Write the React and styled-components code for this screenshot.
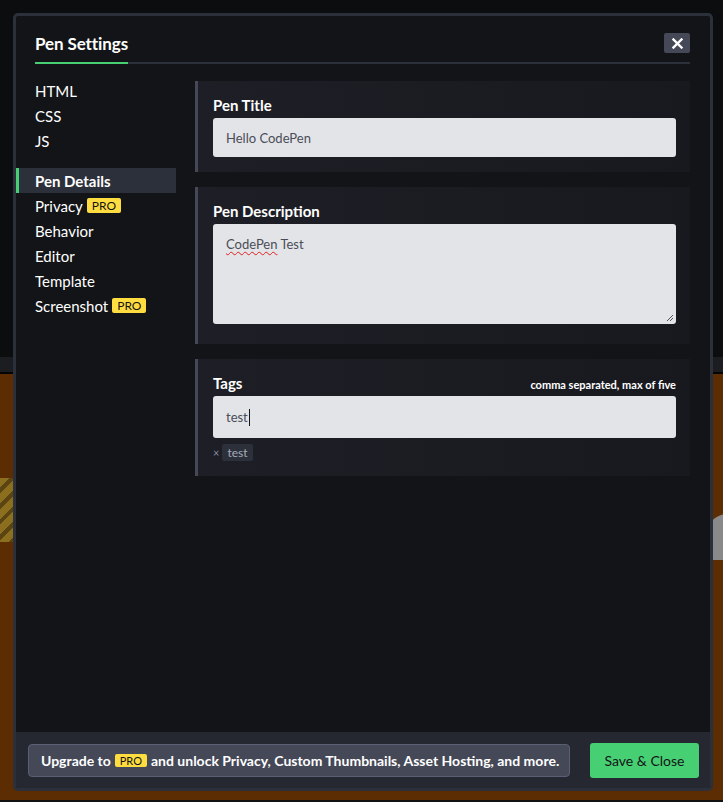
import React from "react";
import styled, { createGlobalStyle } from "styled-components";

const Global = createGlobalStyle`
  html, body { margin: 0; padding: 0; }
  body {
    height: 802px;
    overflow: hidden;
    font-family: Lato, "Open Sans", "Liberation Sans", sans-serif;
    background:
      repeating-linear-gradient(135deg, #8c6e1f 0 7px, #5a4512 7px 11px) 0 478px / 13px 64px no-repeat,
      radial-gradient(circle at 40px 40px, #8a8a8a 0 26px, transparent 27px) 690px 500px / 40px 60px no-repeat,
      linear-gradient(to bottom, #0c0d0f 0, #0c0d0f 357px, #1c1d21 357px, #1c1d21 372px, #050505 372px, #050505 374px, #5c2c02 374px, #5c2c02 800px, #111 800px);
  }
`;

const Page = styled.div`
  padding: 13px 10px 11px 13px;
  box-sizing: border-box;
  height: 802px;
`;

const Modal = styled.div`
  width: 700px;
  height: 778px;
  box-sizing: border-box;
  border: 3px solid #2c303a;
  border-radius: 5px;
  background: #131417;
  display: flex;
  flex-direction: column;
  overflow: hidden;
`;

const Header = styled.div`
  padding: 17px 20px 0 19px;
`;

const TitleRow = styled.div`
  display: flex;
  justify-content: space-between;
  align-items: center;
  height: 20px;
`;

const Title = styled.h1`
  margin: 0;
  font-size: 17px;
  font-weight: 700;
  color: #fff;
  letter-spacing: -0.1px;
`;

const CloseButton = styled.button`
  width: 26px;
  height: 20px;
  border: 0;
  border-radius: 2px;
  background: #444857;
  display: flex;
  align-items: center;
  justify-content: center;
  padding: 0;
`;

const Rule = styled.div`
  margin-top: 9px;
  height: 2px;
  background: linear-gradient(to right, #47cf73 0 93px, #2c303a 93px);
`;

const Body = styled.div`
  flex: 1;
  display: flex;
  gap: 19px;
  padding-right: 20px;
`;

const Sidebar = styled.nav`
  width: 160px;
  flex-shrink: 0;
  padding-top: 14px;
  display: flex;
  flex-direction: column;
`;

const NavGroup = styled.div`
  display: flex;
  flex-direction: column;
  margin-bottom: ${(p) => (p.$gap ? "15px" : "0")};
`;

const NavItem = styled.div`
  height: 25px;
  display: flex;
  align-items: center;
  padding-left: 19px;
  font-size: 15px;
  color: #fff;
  font-weight: ${(p) => (p.$active ? 700 : 400)};
  background: ${(p) => (p.$active ? "#2c303a" : "transparent")};
  box-shadow: ${(p) => (p.$active ? "inset 3px 0 0 #47cf73" : "none")};
`;

const Pro = styled.span`
  display: inline-flex;
  align-items: center;
  height: ${(p) => (p.$small ? "13px" : "15px")};
  padding: 0 5px;
  margin: 0 ${(p) => (p.$small ? "4px" : "0")} 0 4px;
  background: #ffdd40;
  color: #131417;
  border-radius: 2px;
  font-size: ${(p) => (p.$small ? "11px" : "12px")};
  font-weight: 400;
  line-height: 1;
`;

const Content = styled.div`
  flex: 1;
  padding-top: 17px;
  display: flex;
  flex-direction: column;
  gap: 15px;
`;

const Panel = styled.section`
  border-left: 3px solid #444857;
  background: linear-gradient(to right, #1e1f26, #18191e);
  padding: ${(p) => p.$pad};
`;

const LabelRow = styled.div`
  display: flex;
  justify-content: space-between;
  align-items: baseline;
  height: 20px;
  margin-bottom: 3px;
`;

const Label = styled.label`
  font-size: 15px;
  font-weight: 700;
  color: #fff;
  line-height: 20px;
`;

const Hint = styled.span`
  font-size: 11px;
  font-weight: 700;
  color: #fff;
`;

const Field = styled.div`
  position: relative;
  box-sizing: border-box;
  height: ${(p) => p.$h}px;
  background: #e3e4e8;
  border-radius: 3px;
  padding: ${(p) => (p.$multi ? "12px 13px" : "0 13px")};
  display: flex;
  align-items: ${(p) => (p.$multi ? "flex-start" : "center")};
  font-size: 13px;
  color: #4a4d57;
`;

const Misspelled = styled.span`
  text-decoration: underline wavy #e02020;
  text-decoration-thickness: 1px;
  text-underline-offset: 2px;
`;

const Caret = styled.span`
  display: inline-block;
  width: 1px;
  height: 17px;
  background: #131417;
  margin-left: 1px;
`;

const Grip = styled.svg`
  position: absolute;
  right: 2px;
  bottom: 2px;
`;

const TagRow = styled.div`
  display: flex;
  align-items: center;
  margin-top: 6px;
  gap: 3px;
`;

const TagRemove = styled.span`
  font-size: 11px;
  color: #868ca0;
`;

const Tag = styled.span`
  height: 17px;
  padding: 0 5px;
  background: #2c303a;
  border-radius: 2px;
  color: #a7abb9;
  font-size: 12px;
  display: flex;
  align-items: center;
`;

const Footer = styled.footer`
  height: 56px;
  box-sizing: border-box;
  background: #252830;
  padding: 11px 11px 0 12px;
  display: flex;
  justify-content: space-between;
  align-items: flex-start;
`;

const Upgrade = styled.div`
  margin-top: 1px;
  height: 33px;
  box-sizing: border-box;
  width: 542px;
  background: #444857;
  border: 1px solid #5a5f73;
  border-radius: 4px;
  display: flex;
  align-items: center;
  padding-left: 12px;
  font-size: 14px;
  font-weight: 700;
  color: #fff;
  white-space: nowrap;
`;

const SaveButton = styled.button`
  width: 109px;
  height: 35px;
  border: 0;
  border-radius: 3px;
  background: #47cf73;
  color: #131417;
  font-family: inherit;
  font-size: 14px;
  padding: 0;
`;

export default function App() {
  return (
    <>
      <Global />
      <Page>
        <Modal>
          <Header>
            <TitleRow>
              <Title>Pen Settings</Title>
              <CloseButton aria-label="Close">
                <svg width="11" height="11" viewBox="0 0 11 11">
                  <path d="M1.5 1.5 L9.5 9.5 M9.5 1.5 L1.5 9.5" stroke="#fff" strokeWidth="2.4" strokeLinecap="square" />
                </svg>
              </CloseButton>
            </TitleRow>
            <Rule />
          </Header>
          <Body>
            <Sidebar>
              <NavGroup $gap>
                <NavItem>HTML</NavItem>
                <NavItem>CSS</NavItem>
                <NavItem>JS</NavItem>
              </NavGroup>
              <NavGroup>
                <NavItem $active>Pen Details</NavItem>
                <NavItem>Privacy<Pro>PRO</Pro></NavItem>
                <NavItem>Behavior</NavItem>
                <NavItem>Editor</NavItem>
                <NavItem>Template</NavItem>
                <NavItem>Screenshot<Pro>PRO</Pro></NavItem>
              </NavGroup>
            </Sidebar>
            <Content>
              <Panel $pad="14px 14px 15px 15px">
                <LabelRow><Label>Pen Title</Label></LabelRow>
                <Field $h={39}>Hello CodePen</Field>
              </Panel>
              <Panel $pad="14px 14px 20px 15px">
                <LabelRow><Label>Pen Description</Label></LabelRow>
                <Field $h={100} $multi>
                  <span><Misspelled>CodePen</Misspelled> Test</span>
                  <Grip width="10" height="10" viewBox="0 0 10 10">
                    <path d="M9 3 L3 9 M9 6 L6 9" stroke="#555" strokeWidth="1" />
                  </Grip>
                </Field>
              </Panel>
              <Panel $pad="14px 14px 15px 15px">
                <LabelRow>
                  <Label>Tags</Label>
                  <Hint>comma separated, max of five</Hint>
                </LabelRow>
                <Field $h={42}>test<Caret /></Field>
                <TagRow>
                  <TagRemove>×</TagRemove>
                  <Tag>test</Tag>
                </TagRow>
              </Panel>
            </Content>
          </Body>
          <Footer>
            <Upgrade>
              Upgrade to<Pro $small>PRO</Pro>and unlock Privacy, Custom Thumbnails, Asset Hosting, and more.
            </Upgrade>
            <SaveButton>Save &amp; Close</SaveButton>
          </Footer>
        </Modal>
      </Page>
    </>
  );
}
